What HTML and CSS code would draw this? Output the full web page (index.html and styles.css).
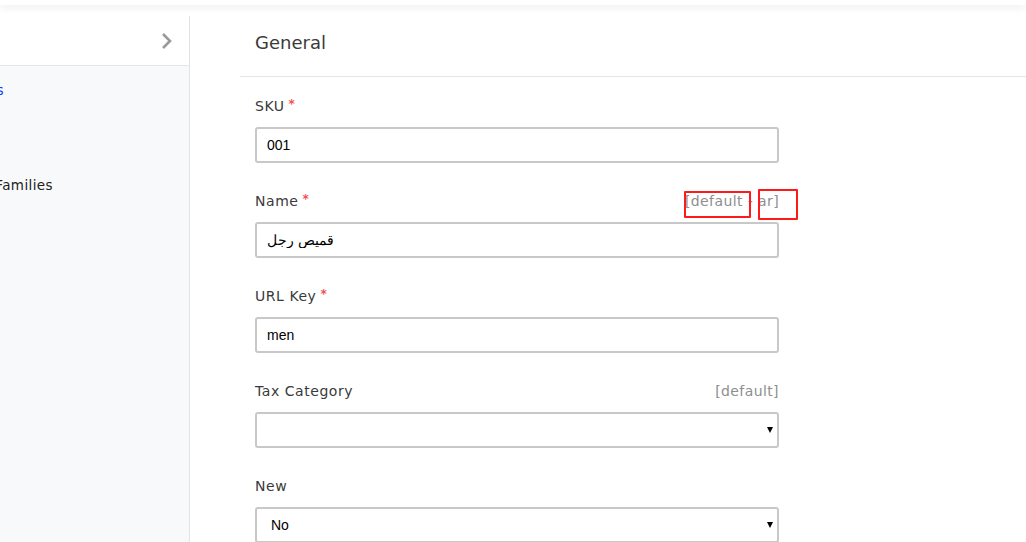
FILE: index.html
```html
<!DOCTYPE html>
<html lang="en">
<head>
<meta charset="utf-8">
<title>Edit Product</title>
<link rel="stylesheet" href="styles.css">
</head>
<body>
<div class="topbar"></div>
<div class="layout">
  <aside class="sidebar">
    <div class="side-head">
      <svg class="chev" width="12" height="18" viewBox="0 0 12 18"><path d="M2 2l7 7-7 7" fill="none" stroke="#9a9a9a" stroke-width="2.6"/></svg>
    </div>
    <ul class="side-menu">
      <li class="side-item active"><span class="side-text">Attributes</span></li>
      <li class="side-item fam"><span class="side-text">Attribute Families</span></li>
    </ul>
  </aside>
  <main class="main">
    <div class="section-title">General</div>
    <div class="section-body">
      <div class="field">
        <div class="label-row"><label class="label required">SKU</label></div>
        <input class="control" type="text" value="001">
      </div>
      <div class="field">
        <div class="label-row">
          <label class="label required">Name</label>
          <span class="locale">[default - ar]</span>
          <span class="mark mark-1"></span>
          <span class="mark mark-2"></span>
        </div>
        <input class="control" type="text" value="قميص رجل">
      </div>
      <div class="field">
        <div class="label-row"><label class="label required">URL Key</label></div>
        <input class="control" type="text" value="men">
      </div>
      <div class="field">
        <div class="label-row">
          <label class="label">Tax Category</label>
          <span class="locale">[default]</span>
        </div>
        <div class="select-wrap">
          <select class="control select"><option></option></select>
        </div>
      </div>
      <div class="field">
        <div class="label-row"><label class="label">New</label></div>
        <div class="select-wrap">
          <select class="control select"><option>No</option><option>Yes</option></select>
        </div>
      </div>
    </div>
  </main>
</div>
</body>
</html>
```
FILE: styles.css
```css
* { box-sizing: border-box; }
html, body { margin: 0; padding: 0; }
body {
  width: 1026px;
  height: 542px;
  overflow: hidden;
  background: #fff;
  font-family: "DejaVu Sans", "Open Sans", sans-serif;
  color: #3a3a3a;
}
.topbar {
  height: 5px;
  background: #fff;
  box-shadow: 0 2px 9px rgba(0, 0, 0, 0.09);
  position: relative;
  z-index: 2;
}
.layout {
  display: flex;
  margin-top: 11px;
  height: 526px;
}
.sidebar {
  width: 190px;
  flex: none;
  background: #f8f9fb;
  border-right: 1px solid #e3e3e3;
  overflow: hidden;
}
.side-head {
  height: 50px;
  background: #fff;
  border-bottom: 1px solid #e6e6e6;
  display: flex;
  align-items: center;
  justify-content: flex-end;
  padding-right: 16px;
}
.chev { display: block; }
.side-menu {
  list-style: none;
  margin: 0;
  padding: 14px 0 0;
}
.side-item {
  display: flex;
  justify-content: flex-end;
  height: 95px;
  font-size: 13.5px;
  letter-spacing: 0.4px;
  line-height: 20px;
  white-space: nowrap;
}
.side-text { flex: none; }
.side-item.active { color: #0041ff; width: 4px; }
.side-item.fam { color: #222; width: 53px; }
.main {
  flex: 1;
  margin-left: 50px;
}
.section-title {
  height: 61px;
  padding: 17px 0 0 15px;
  font-size: 18px;
  line-height: 20px;
  color: #3a3a3a;
  border-bottom: 1px solid #e6e6e6;
}
.section-body {
  padding: 19px 0 0 15px;
  width: 540px;
}
.field {
  width: 524px;
  margin-bottom: 28px;
}
.label-row {
  position: relative;
  display: flex;
  justify-content: space-between;
  align-items: center;
  height: 20px;
  margin-bottom: 11px;
  font-size: 14px;
  letter-spacing: 0.55px;
}
.label { color: #3a3a3a; }
.label.required::after {
  content: "*";
  color: #f05153;
  margin-left: 4px;
  font-size: 12px;
  font-weight: bold;
  position: relative;
  top: -3px;
}
.locale { color: #8e8e8e; letter-spacing: 0.4px; }
.mark {
  position: absolute;
  border: 2px solid #ff1a1a;
  border-radius: 1px;
}
.mark-1 { left: 429px; top: 0; width: 67px; height: 27px; }
.mark-2 { left: 503px; top: -2px; width: 40px; height: 31px; }
.control {
  display: block;
  width: 524px;
  height: 36px;
  border: 2px solid #c8c8c8;
  border-radius: 3px;
  background: #fff;
  padding: 0 10px;
  font-family: "Liberation Sans", Arial, sans-serif;
  font-size: 14px;
  color: #000;
  outline: none;
}
.select-wrap { position: relative; width: 524px; }
.select {
  -webkit-appearance: none;
  appearance: none;
  padding: 0 30px 0 14px;
}
.select-wrap::after {
  content: "";
  position: absolute;
  right: 6px;
  top: 15px;
  border-left: 3.5px solid transparent;
  border-right: 3.5px solid transparent;
  border-top: 6px solid #000;
}
```
